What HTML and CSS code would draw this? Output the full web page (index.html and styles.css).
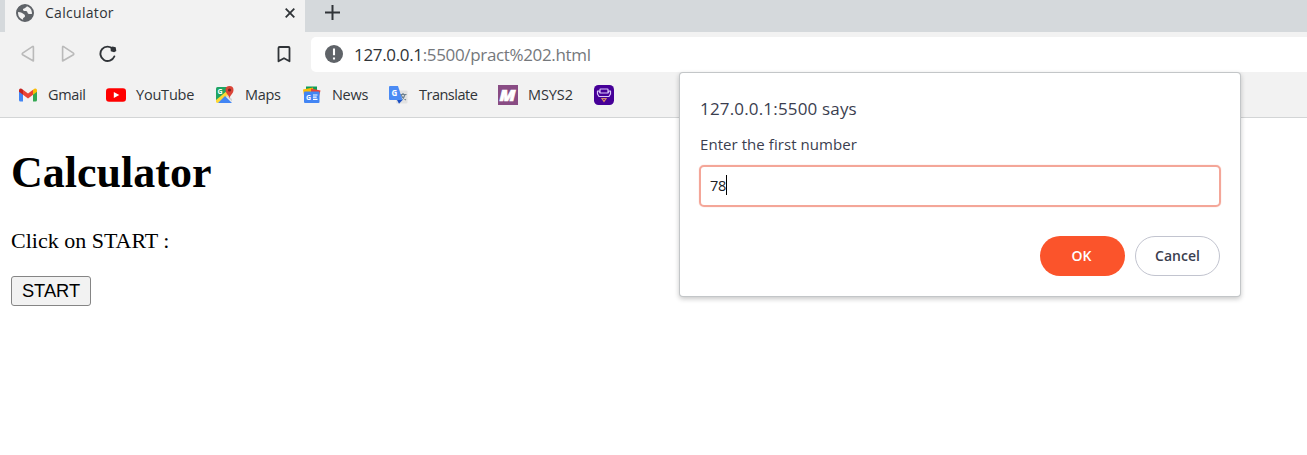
FILE: index.html
```html
<!DOCTYPE html>
<html lang="en">
<head>
<meta charset="utf-8">
<title>Calculator</title>
<link rel="stylesheet" href="styles.css">
</head>
<body>
<header class="browser">
  <div class="tabs">
    <div class="tab">
      <svg class="globe" width="18" height="18" viewBox="0 0 18 18"><circle cx="9" cy="9" r="8" fill="#f2f2f2" stroke="#5f6368" stroke-width="2"/><path d="M1 8C1 4 4 1 8 1h3c0 2-1 2-2 3S7 4 7 6c0 1 2 1 3 1 2 0 1 3 3 3h4c-1 4-3 7-7 7-2 0-3-1-3-2 0-2 2-1 2-3S7 10 6 9 3 8 1 8z" fill="#5f6368"/></svg>
      <span class="tab-title">Calculator</span>
      <svg class="close" width="10" height="10" viewBox="0 0 10 10"><path d="M.7.7l8.6 8.6M9.3.7L.7 9.3" stroke="#303438" stroke-width="1.8"/></svg>
    </div>
    <svg class="plus" width="15" height="15" viewBox="0 0 15 15"><path d="M7.5 0v15M0 7.5h15" stroke="#303438" stroke-width="2"/></svg>
  </div>
  <div class="toolbar">
    <svg class="back" width="14" height="18" viewBox="0 0 14 18"><path d="M12.4 2v14L1.600 9.800a1 1 0 0 1 0-1.600L11.400 1.600q1-.6 1 .4z" fill="none" stroke="#bababa" stroke-width="1.600" stroke-linejoin="round"/></svg>
    <svg class="forward" width="14" height="18" viewBox="0 0 14 18"><path d="M1.600 2v14l10.800-6.200a1 1 0 0 0 0-1.600L2.600 1.600q-1-.6-1 .4z" fill="none" stroke="#bababa" stroke-width="1.600" stroke-linejoin="round"/></svg>
    <svg class="reload" width="18" height="18" viewBox="0 0 18 18"><path d="M14 4A7.200 7.200 0 1 0 15.300 11.500" fill="none" stroke="#303438" stroke-width="1.900" stroke-linecap="round"/><path d="M11.500 2.600l2-1 3.200.7.6 3.600-2.200 1.400-3.300-1z" fill="#303438"/></svg>
    <svg class="save" width="14" height="17" viewBox="0 0 14 17"><path d="M1.500 15.300V2q0-1 1-1h9q1 0 1 1v13.300L7 12.200z" fill="none" stroke="#303438" stroke-width="1.800" stroke-linejoin="round"/></svg>
    <div class="address">
      <svg width="18" height="18" viewBox="0 0 18 18"><circle cx="9" cy="9" r="9" fill="#5f6368"/><path d="M9 3.500v6.800M9 12.400v2.200" stroke="#fff" stroke-width="2.100"/></svg>
      <span class="url"><b>127.0.0.1</b>:5500/pract%202.html</span>
    </div>
  </div>
  <nav class="bookmarks">
    <a class="mark gmail"><svg width="18" height="20" viewBox="0 0 18 20"><path d="M0 6l4 3v7.500H1.500Q0 16.500 0 15z" fill="#4285f4"/><path d="M18 6l-4 3v7.500h2.500q1.500 0 1.500-1.500z" fill="#34a853"/><path d="M4 4.800l5 3.700 5-3.700v4.900L9 13.400 4 9.700z" fill="#ea4335"/><path d="M0 5.500C0 3.200 2 2.800 4 4.800v4.900L0 6.800z" fill="#c5221f"/><path d="M18 5.500c0-2.300-2-2.700-4-.7v4.900l4-2.900z" fill="#fbbc04"/></svg><span>Gmail</span></a>
    <a class="mark youtube"><svg width="20" height="20" viewBox="0 0 20 20"><rect y="3.200" width="20" height="13.600" rx="3" fill="red"/><path d="M7.800 7v6l5.500-3z" fill="#fff"/></svg><span>YouTube</span></a>
    <a class="mark maps"><svg width="20" height="20" viewBox="0 0 20 20"><path d="M1 3.500Q1 2 2.500 2H12v6L1 17z" fill="#1fa463"/><path d="M1 15L13 5l2 4-12 9q-2 0-2-1.500z" fill="#fdd835"/><path d="M3 18l7-7 7 7z" fill="#4285f4"/><path d="M12 10l5 4v2.500l-6-5.500z" fill="#d3d3d3"/><path d="M14.500 14c0-4-4-5-4-9a4 4 0 0 1 8 0c0 4-4 5-4 9z" fill="#db4437"/><circle cx="14.500" cy="5" r="1.600" fill="#7b231e"/><text x="2.500" y="8.500" class="micro" fill="#fff">G</text></svg><span>Maps</span></a>
    <a class="mark news"><svg width="20" height="20" viewBox="0 0 20 20"><path d="M4 1.500h11v6H4z" fill="#0f9d58"/><path d="M1 4.500l10-2 1 8H2z" fill="#fbbc04"/><path d="M9 3.500l9.500 2-2 8H9z" fill="#ea4335"/><rect x="2" y="6.500" width="15.500" height="11.500" rx="1" fill="#4285f4"/><text x="4" y="15" class="micro" fill="#fff">G</text><path d="M11 10h4.500M11 12.200h3.700M11 14.400h4.500" stroke="#fff" stroke-width="1.200"/></svg><span>News</span></a>
    <a class="mark translate"><svg width="20" height="20" viewBox="0 0 20 20"><rect x="7" y="5.500" width="11.500" height="13" rx="1" fill="#e2e2e2"/><path d="M11 9.500h6.500M14 8v1.500M16 9.500q-1 3.500-3.500 5.500M12 10q1.500 3.500 5 5" stroke="#6f8290" stroke-width="1.200" fill="none"/><path d="M1 1h8l4.500 14H1q-1 0-1-1V2q0-1 1-1z" fill="#4b8bf4"/><path d="M8 15h5.500L10 18.700z" fill="#1b4fc4"/><text x="2.500" y="10.500" class="micro large" fill="#fff">G</text></svg><span>Translate</span></a>
    <a class="mark msys"><svg width="20" height="20" viewBox="0 0 20 20"><rect width="20" height="20" fill="#894c84"/><text x="1.500" y="15.500" class="emblem" fill="#fff" stroke="#fff" stroke-width=".6" textLength="16" lengthAdjust="spacingAndGlyphs">M</text></svg><span>MSYS2</span></a>
    <a class="mark"><svg width="20" height="20" viewBox="0 0 20 20"><rect width="20" height="20" rx="4.500" fill="#460098"/><path d="M6 8V4.500Q6 4 6.500 4h7q.5 0 .5.500V8M6 8h8l1-2h1.500v3L15 11.500H5L3.500 9V6H5z" fill="none" stroke="#d9c5fa" stroke-width="1.200" stroke-linejoin="round"/><path d="M8 13.500h4l-2 3z" fill="none" stroke="#d78b69" stroke-width="1.200"/></svg></a>
  </nav>
</header>
<main class="page">
  <h1>Calculator</h1>
  <p>Click on START :</p>
  <button class="start">START</button>
</main>
<section class="dialog">
  <h2>127.0.0.1:5500 says</h2>
  <p class="message">Enter the first number</p>
  <div class="field"><span class="value">78</span><i class="caret"></i></div>
  <div class="actions"><button class="ok">OK</button><button class="cancel">Cancel</button></div>
</section>
</body>
</html>
```
FILE: styles.css
```css
* { box-sizing: border-box; }
body { margin: 0; height: 455px; overflow: hidden; background: #fff; font-family: "Open Sans", "Noto Sans", sans-serif; }
svg { display: block; flex: none; }
.browser { height: 118px; background: #f2f2f2; border-bottom: 1px solid #d3d5d6; }
.tabs { height: 32px; padding-left: 5px; display: flex; background: #d5d9dc; }
.tab { width: 300px; padding: 0 10px 7px 11px; background: #f2f2f2; display: flex; align-items: center; }
.tab-title { margin-left: 11px; font-size: 14px; letter-spacing: .3px; line-height: 20px; color: #303438; }
.close { margin-left: auto; }
.plus { margin: 5px 0 0 20px; }
.toolbar { height: 44px; display: flex; align-items: center; padding-left: 21px; }
.forward { margin-left: 26px; }
.reload { margin-left: 24px; }
.save { margin-left: 160px; }
.address { flex: 1; height: 35px; margin-left: 20px; padding-left: 14px; border-radius: 5px 0 0 5px; background: #fff; display: flex; align-items: center; }
.url { margin-left: 11px; font-size: 17px; letter-spacing: -.34px; color: #75787c; white-space: nowrap; }
.url b { font-weight: 400; color: #303438; }
.bookmarks { height: 38px; padding-left: 19px; display: flex; align-items: center; }
.mark { display: flex; align-items: center; gap: 10px; width: 87px; color: #303438; font-size: 14.5px; letter-spacing: -.3px; line-height: 20px; white-space: nowrap; }
.gmail { letter-spacing: -.35px; }
.mark svg { margin-top: -1px; }
.gmail { gap: 11px; }
.youtube, .translate { width: 109px; }
.youtube { letter-spacing: -.2px; }
.translate { letter-spacing: -.5px; }
.msys { width: 96px; letter-spacing: -.1px; }
.mark span { margin-top: -1px; }
.micro { font: bold 7px "Open Sans", sans-serif; letter-spacing: 0; }
.large { font-size: 8px; }
.emblem { font: italic 800 15px "Open Sans", sans-serif; letter-spacing: 0; }
.page { padding: 28px 11px; font-family: "Liberation Serif", "Times New Roman", serif; color: #000; }
.page h1 { margin: 0; font-size: 44px; line-height: 54px; }
.page p { margin: 27px 0 22px; font-size: 22px; line-height: 27px; }
.start { display: block; width: 80px; height: 30px; padding: 0; border: 1px solid #858585; border-radius: 3px; background: #f2f2f2; font: 18.3px "Liberation Sans", Arial, sans-serif; color: #000; }
.dialog { position: absolute; left: 680px; top: 73px; width: 560px; height: 223px; padding: 24px 19px 20px 19px; border-radius: 3px; background: #fff; box-shadow: 0 0 0 1px #c3c6c8, 0 2px 5px 1px #00000038; color: #3b3e4f; }
.dialog h2 { margin: 0 0 0 1px; font-size: 17px; letter-spacing: .17px; line-height: 24px; font-weight: 400; }
.message { margin: 11px 0 9px 1px; font-size: 15px; letter-spacing: .06px; line-height: 24px; }
.field { height: 42px; width: 522px; border: 2px solid #f4a698; border-radius: 5px; box-shadow: 0 0 1px #f4a698; padding-left: 9px; display: flex; align-items: center; font-size: 14.5px; color: #202124; letter-spacing: -.3px; }
.value { line-height: 20px; }
.caret { width: 1px; height: 20px; margin-bottom: 2px; background: #000; }
.actions { display: flex; justify-content: flex-end; gap: 10px; margin: 29px 1px 0 0; }
.actions button { width: 85px; height: 40px; padding: 0 0 2px; border-radius: 20px; font: 600 14px "Open Sans", sans-serif; }
.actions .ok { padding-right: 2px; border: 0; background: #fb542b; color: #fff; }
.cancel { border: 1px solid #c2c4cf; background: #fff; color: #3b3e4f; }
```
